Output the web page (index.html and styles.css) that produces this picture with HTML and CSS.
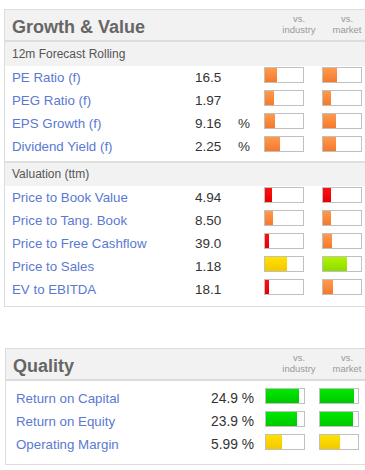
FILE: index.html
```html
<!DOCTYPE html>
<html>
<head>
<meta charset="utf-8">
<link rel="stylesheet" href="styles.css">
</head>
<body>
<section class="panel panel-gv">
  <div class="head">
    <h2 class="title">Growth &amp; Value</h2>
    <div class="vs">vs.<br>industry</div>
    <div class="vs">vs.<br>market</div>
  </div>
  <div class="sub sub-first">12m Forecast Rolling</div>
  <div class="rows">
    <div class="row"><span class="lbl">PE Ratio (f)</span><span class="val">16.5</span><span class="pct"></span><span class="bar"><i class="fill orange" style="width:12px"></i></span><span class="bar"><i class="fill orange" style="width:14px"></i></span></div>
    <div class="row"><span class="lbl">PEG Ratio (f)</span><span class="val">1.97</span><span class="pct"></span><span class="bar"><i class="fill orange" style="width:9px"></i></span><span class="bar"><i class="fill orange" style="width:8px"></i></span></div>
    <div class="row"><span class="lbl">EPS Growth (f)</span><span class="val">9.16</span><span class="pct">%</span><span class="bar"><i class="fill orange" style="width:10px"></i></span><span class="bar"><i class="fill orange" style="width:13px"></i></span></div>
    <div class="row"><span class="lbl">Dividend Yield (f)</span><span class="val">2.25</span><span class="pct">%</span><span class="bar"><i class="fill orange" style="width:15px"></i></span><span class="bar"><i class="fill orange" style="width:13px"></i></span></div>
  </div>
  <div class="sub sub-second">Valuation (ttm)</div>
  <div class="rows rows-last">
    <div class="row"><span class="lbl">Price to Book Value</span><span class="val">4.94</span><span class="pct"></span><span class="bar"><i class="fill red" style="width:7px"></i></span><span class="bar"><i class="fill red" style="width:8px"></i></span></div>
    <div class="row"><span class="lbl">Price to Tang. Book</span><span class="val">8.50</span><span class="pct"></span><span class="bar"><i class="fill orange" style="width:8px"></i></span><span class="bar"><i class="fill orange" style="width:8px"></i></span></div>
    <div class="row"><span class="lbl">Price to Free Cashflow</span><span class="val">39.0</span><span class="pct"></span><span class="bar"><i class="fill red" style="width:4px"></i></span><span class="bar"><i class="fill orange" style="width:9px"></i></span></div>
    <div class="row"><span class="lbl">Price to Sales</span><span class="val">1.18</span><span class="pct"></span><span class="bar"><i class="fill yellow" style="width:22px"></i></span><span class="bar"><i class="fill lime" style="width:24px"></i></span></div>
    <div class="row"><span class="lbl">EV to EBITDA</span><span class="val">18.1</span><span class="pct"></span><span class="bar"><i class="fill red" style="width:4px"></i></span><span class="bar"><i class="fill orange" style="width:10px"></i></span></div>
  </div>
</section>

<section class="panel panel-q">
  <div class="head">
    <h2 class="title">Quality</h2>
    <div class="vs">vs.<br>industry</div>
    <div class="vs">vs.<br>market</div>
  </div>
  <div class="rows qrows">
    <div class="qrow"><span class="lbl">Return on Capital</span><span class="val">24.9 %</span><span class="bar"><i class="fill green" style="width:33px"></i></span><span class="bar"><i class="fill green" style="width:34px"></i></span></div>
    <div class="qrow"><span class="lbl">Return on Equity</span><span class="val">23.9 %</span><span class="bar"><i class="fill green" style="width:31px"></i></span><span class="bar"><i class="fill green" style="width:33px"></i></span></div>
    <div class="qrow"><span class="lbl">Operating Margin</span><span class="val">5.99 %</span><span class="bar"><i class="fill yellow" style="width:16px"></i></span><span class="bar"><i class="fill yellow" style="width:20px"></i></span></div>
  </div>
</section>
</body>
</html>
```

FILE: styles.css
```css
html, body {
  overflow: hidden;
}
body {
  margin: 0;
  background: #fff;
  font-family: "Liberation Sans", Arial, sans-serif;
}
.panel {
  box-sizing: border-box;
  width: 364px;
  border: 1px solid #dcdcdc;
  background: #fff;
}
.panel-gv {
  margin: 9px 0 0 4px;
}
.panel-q {
  margin: 41px 0 0 5px;
}
.head {
  display: flex;
  align-items: flex-start;
  height: 30px;
  background: #f2f2f2;
  border-bottom: 2px solid #dcdcdc;
  padding-left: 7px;
}
.panel-q .head {
  padding-right: 1px;
}
.title {
  flex: 1;
  margin: 0;
  padding-top: 6px;
  font-size: 18px;
  line-height: 22px;
  font-weight: bold;
  color: #666;
}
.vs {
  width: 40px;
  margin-left: 8px;
  padding-top: 3px;
  text-align: center;
  font-size: 9.5px;
  line-height: 11px;
  color: #999;
}
.sub {
  background: #f2f2f2;
  padding-left: 7px;
  font-size: 12px;
  color: #555;
}
.sub-first {
  height: 24px;
  line-height: 24px;
}
.sub-second {
  height: 23px;
  line-height: 23px;
  border-top: 2px solid #dfdfdf;
  margin-top: 3px;
}
.rows-last {
  padding-bottom: 5px;
}
.row {
  display: grid;
  grid-template-columns: 183px 43px 26px 58px 40px;
  height: 23px;
  padding-left: 7px;
  line-height: 23px;
  font-size: 13.3px;
}
.qrows {
  padding: 6px 0 8px;
}
.qrow {
  display: grid;
  grid-template-columns: 184px 54px 65px 40px;
  height: 23px;
  padding-left: 10px;
  line-height: 23px;
  font-size: 13.3px;
}
.qrow .val {
  text-align: right;
  font-size: 13.8px;
}
.qrow .bar:nth-child(3) {
  margin-left: 11px;
}
.lbl {
  color: #5a79d2;
  white-space: nowrap;
}
.val, .pct {
  color: #333;
  font-size: 13.5px;
}
.bar {
  box-sizing: border-box;
  display: block;
  width: 40px;
  height: 16px;
  margin-top: 1px;
  border: 1px solid #c0c0c0;
  background: #fff;
}
.fill {
  display: block;
  height: 14px;
}
.orange { background: linear-gradient(#ff9a4e, #f5792c); }
.red { background: linear-gradient(#ff1010, #e80000); }
.yellow { background: linear-gradient(#ffe200, #f3c800); }
.lime { background: linear-gradient(#b2f400, #8cdc00); }
.green { background: linear-gradient(#00e800, #00c800); }
```
